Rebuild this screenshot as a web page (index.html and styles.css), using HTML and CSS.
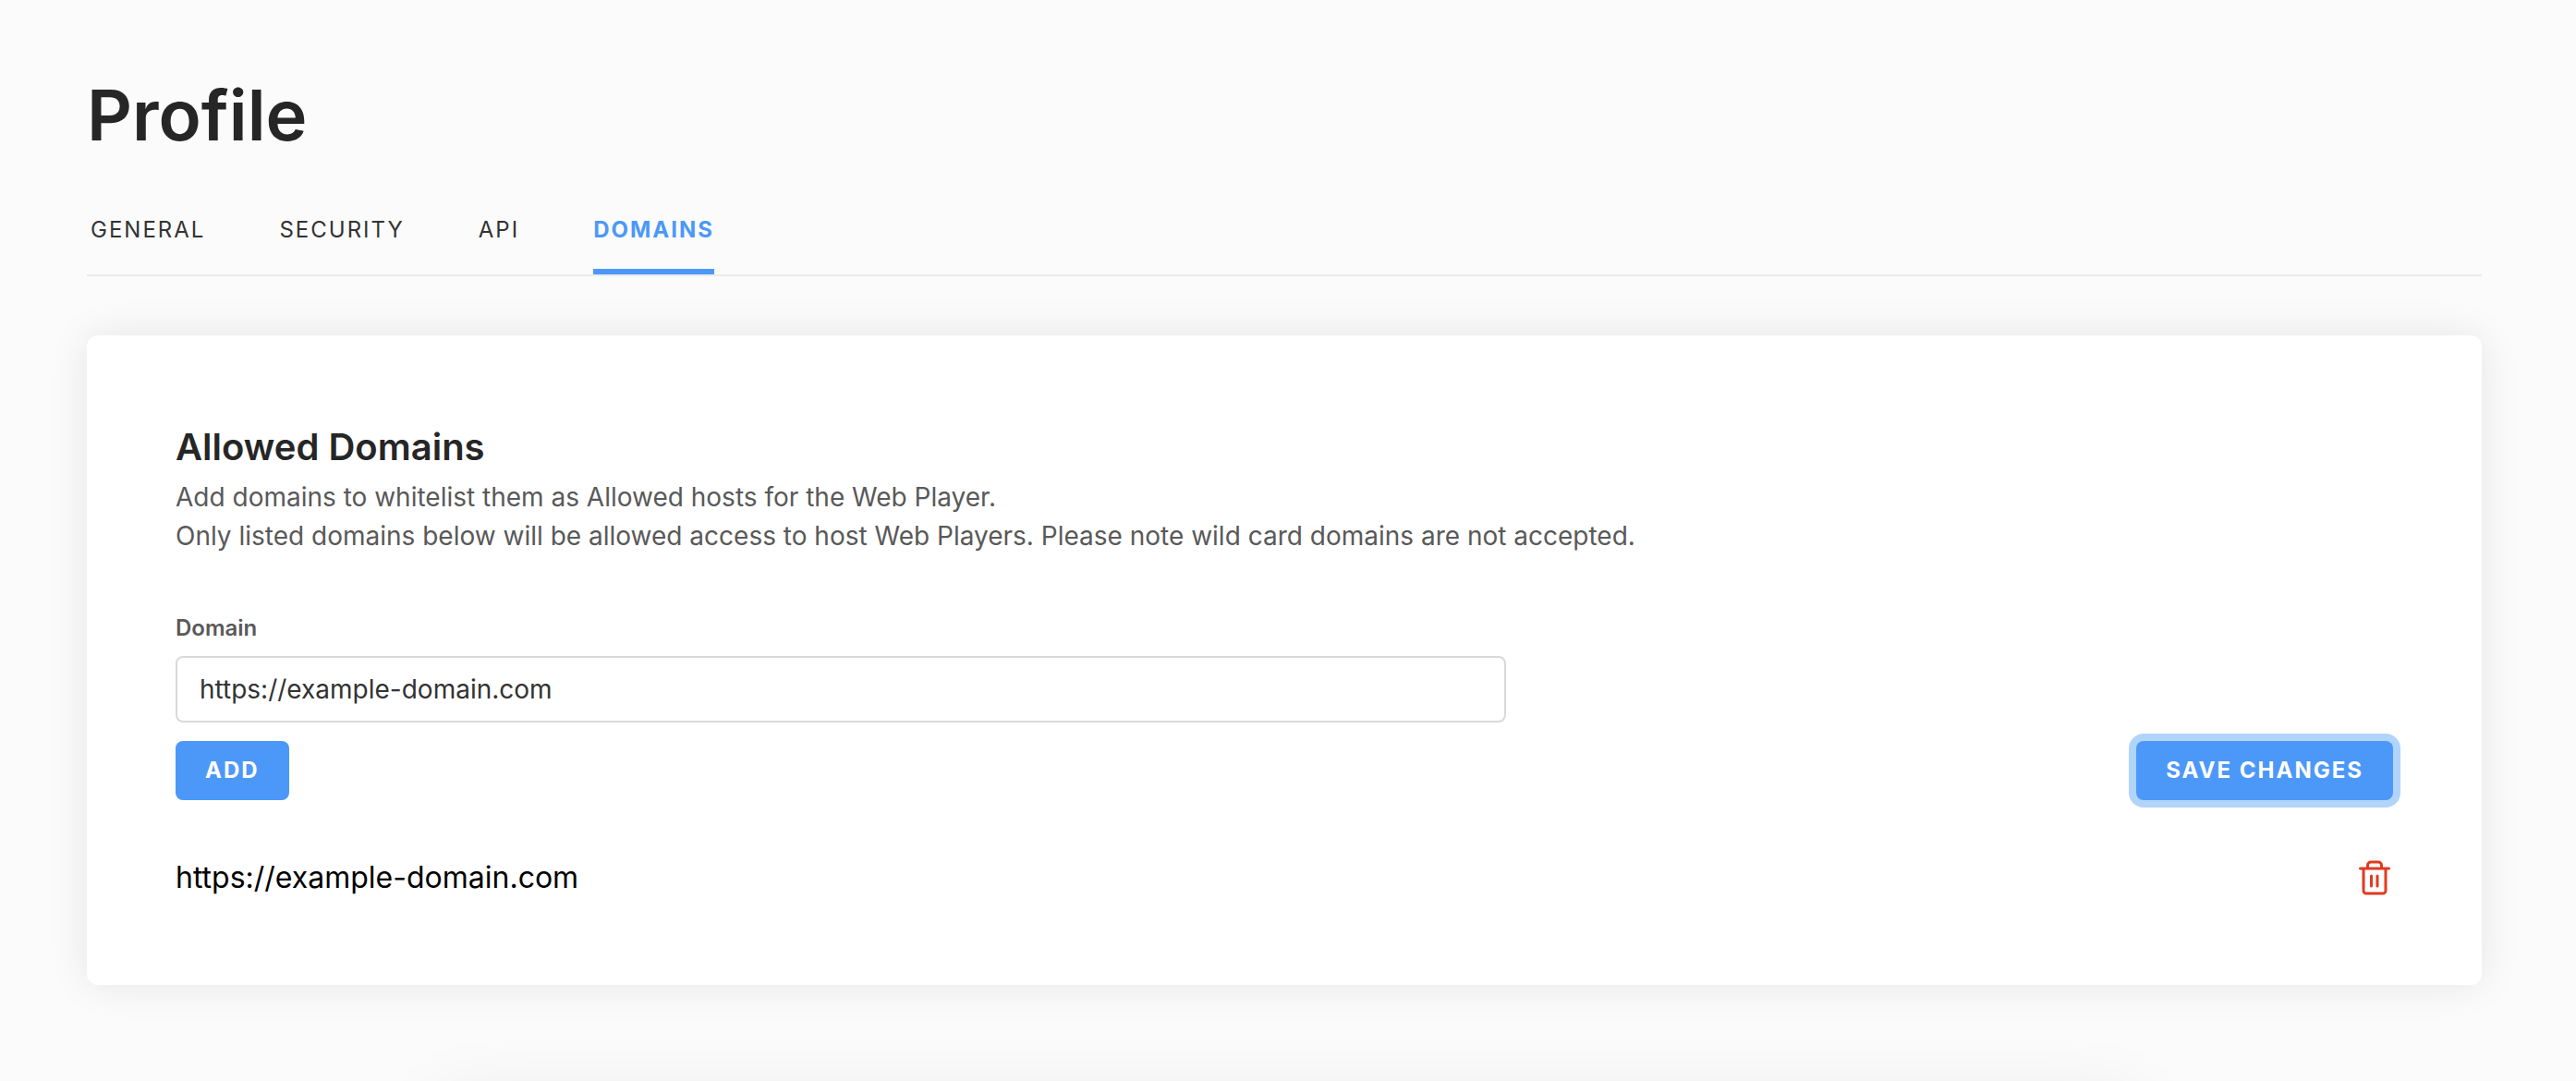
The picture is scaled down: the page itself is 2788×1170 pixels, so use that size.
FILE: index.html
```html
<!DOCTYPE html>
<html lang="en">
<head>
<meta charset="utf-8">
<title>Profile</title>
<link rel="stylesheet" href="styles.css">
</head>
<body>
<main class="page">
  <h1 class="page-title">Profile</h1>
  <nav class="tabs">
    <a class="tab" href="#general">GENERAL</a>
    <a class="tab" href="#security">SECURITY</a>
    <a class="tab" href="#api">API</a>
    <a class="tab tab-active" href="#domains" aria-current="page">DOMAINS</a>
  </nav>
  <section class="card">
    <h2 class="card-title">Allowed Domains</h2>
    <p class="card-text">Add domains to whitelist them as Allowed hosts for the Web Player.<br>Only listed domains below will be allowed access to host Web Players. Please note wild card domains are not accepted.</p>
    <form class="form">
      <label class="label" for="domain">Domain</label>
      <input class="input" id="domain" type="text" value="https://example-domain.com">
      <div class="actions">
        <button class="button" type="button">ADD</button>
        <button class="button button-focused" type="submit">SAVE CHANGES</button>
      </div>
    </form>
    <ul class="domains">
      <li class="domain">
        <span>https://example-domain.com</span>
        <button class="delete" type="button" aria-label="Delete domain">
          <svg class="delete-icon" viewBox="0 0 40 40" fill="none" stroke="currentColor" stroke-width="3" stroke-linecap="round" stroke-linejoin="round">
            <path d="M4.500 10H35.500M12.500 10V6.500a3.500 3.500 0 0 1 3.500-3.500h8a3.500 3.500 0 0 1 3.500 3.500V10M8 10V34a3 3 0 0 0 3 3H29a3 3 0 0 0 3-3V10M16.500 18V29M23 18V29"/>
          </svg>
        </button>
      </li>
    </ul>
  </section>
</main>
<div class="toast" role="status"></div>
</body>
</html>
```
FILE: styles.css
```css
* { box-sizing: border-box; }

body {
  margin: 0;
  min-height: 100vh;
  overflow-x: hidden;
  background: #fbfbfb;
  color: #262626;
  font-family: Inter, "Liberation Sans", sans-serif;
}

.page { padding: 78px 102px 104px 94px; }

.page-title {
  margin: 0;
  font-size: 76px;
  line-height: 92px;
  font-weight: 600;
}

.tabs {
  display: flex;
  gap: 80px;
  margin-top: 60px;
  padding-left: 4px;
  border-bottom: 2px solid #ebebeb;
}

.tab {
  padding-bottom: 23px;
  border-bottom: 6px solid transparent;
  color: #333;
  font-size: 24px;
  line-height: 38px;
  font-weight: 400;
  letter-spacing: 2px;
  text-decoration: none;
}

.tab-active {
  border-color: #4c98f8;
  color: #4c98f8;
  font-weight: 700;
}

.card {
  margin-top: 64px;
  padding: 96px 96px 92px;
  border-radius: 12px;
  background: #fff;
  box-shadow: 0 0 44px rgba(0, 0, 0, 0.09);
}

.card-title {
  margin: 0;
  font-size: 40px;
  line-height: 50px;
  font-weight: 600;
}

.card-text {
  margin: 8px 0 0;
  color: #595959;
  font-size: 28px;
  line-height: 42px;
}

.form { margin-top: 60px; }

.label {
  display: block;
  color: #595959;
  font-size: 24px;
  line-height: 37px;
  font-weight: 600;
}

.input {
  display: block;
  width: 60%;
  height: 72px;
  margin-top: 12px;
  padding: 0 24px;
  border: 2px solid #d9d9d9;
  border-radius: 8px;
  background: #fff;
  color: #333;
  font: inherit;
  font-size: 28px;
}

.actions {
  display: flex;
  justify-content: space-between;
  margin-top: 20px;
}

.button {
  padding: 0 32px;
  border: 0;
  border-radius: 8px;
  background: #4c98f8;
  color: #fff;
  font-family: inherit;
  font-size: 24px;
  line-height: 64px;
  font-weight: 700;
  letter-spacing: 2px;
}

.button-focused { box-shadow: 0 0 0 8px #b1d4fb; }

.domains {
  margin: 60px 0 0;
  padding: 0;
  list-style: none;
}

.domain {
  display: flex;
  align-items: center;
  justify-content: space-between;
  color: #000;
  font-size: 32px;
  line-height: 48px;
}

.delete {
  display: flex;
  padding: 0;
  border: 0;
  background: none;
  color: #e13a20;
}

.delete-icon {
  width: 40px;
  height: 40px;
}

.toast {
  position: fixed;
  top: 100%;
  left: 17%;
  right: 17%;
  height: 80px;
  margin-top: 20px;
  border-radius: 12px;
  background: #fff;
  box-shadow: 0 0 80px rgba(0, 0, 0, 0.08);
}
```
